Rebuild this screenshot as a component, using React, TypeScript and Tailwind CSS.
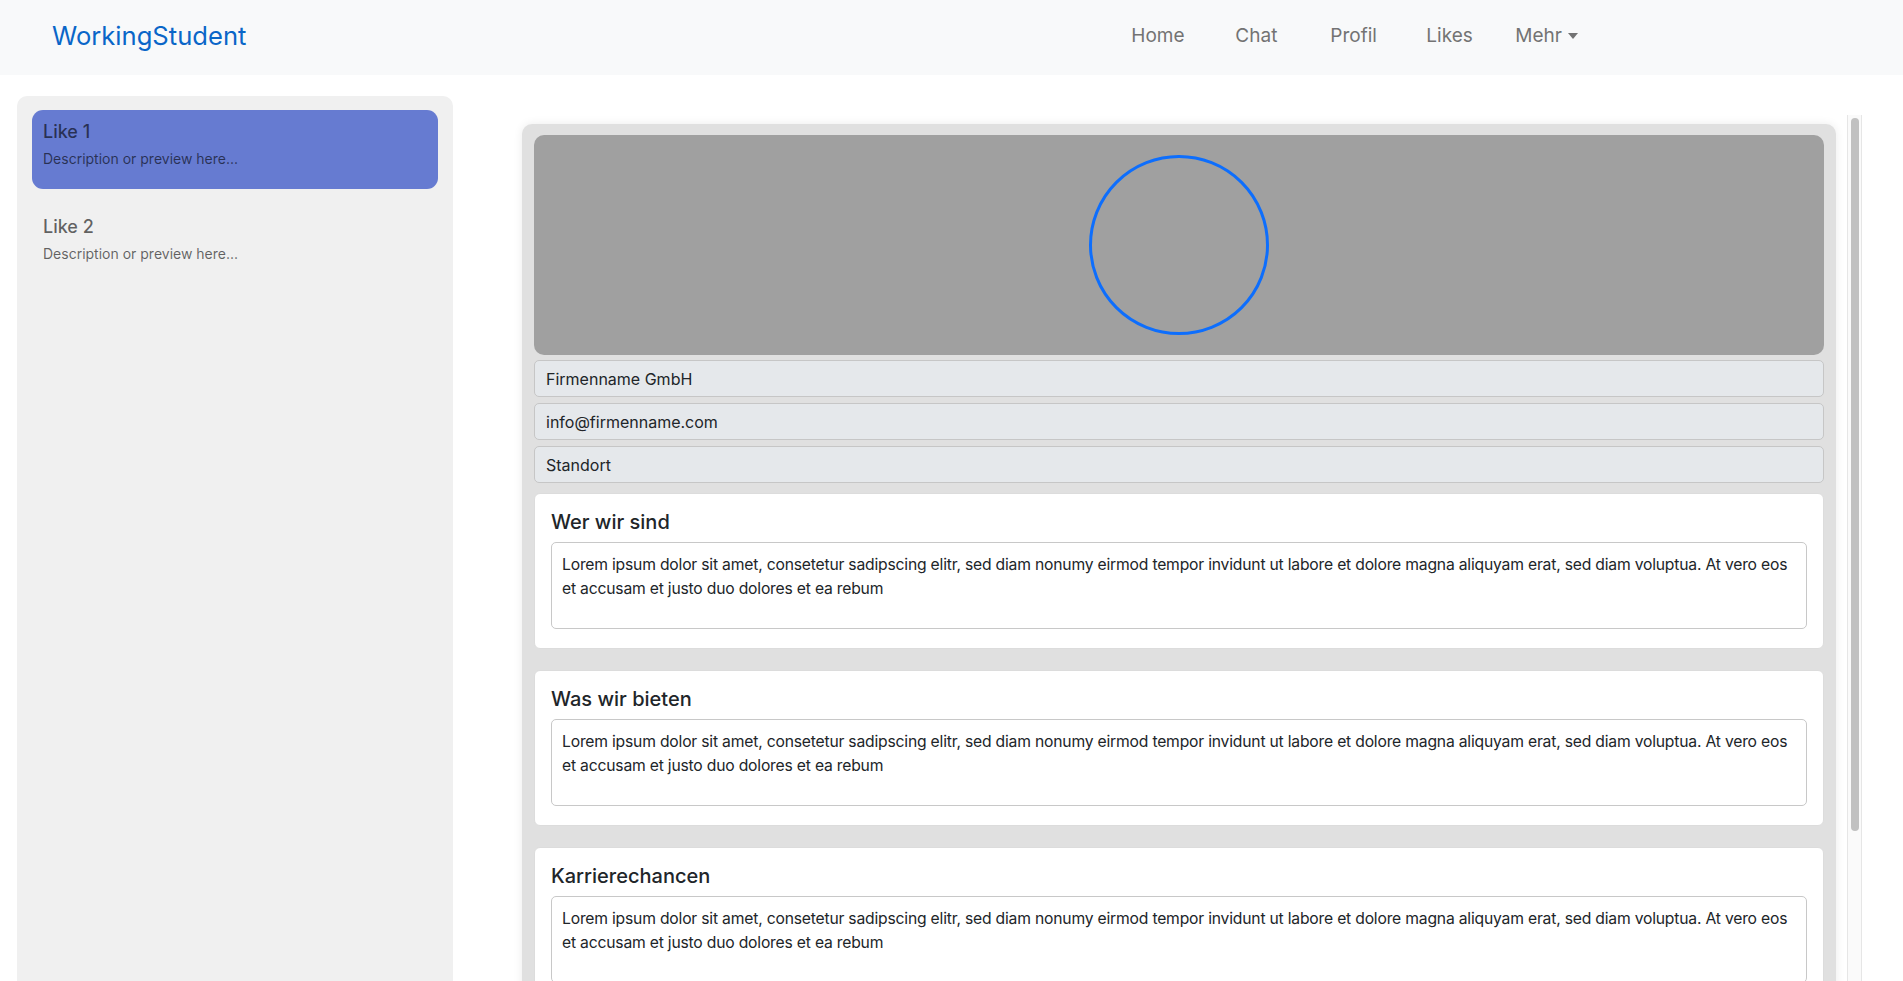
import React from 'react';

// Sidebar entries
interface Like {
  id: number;
  title: string;
  preview: string;
}

const likes: Like[] = [
  { id: 1, title: 'Like 1', preview: 'Description or preview here...' },
  { id: 2, title: 'Like 2', preview: 'Description or preview here...' },
];

const lorem =
  'Lorem ipsum dolor sit amet, consetetur sadipscing elitr, sed diam nonumy eirmod tempor invidunt ut labore et dolore magna aliquyam erat, sed diam voluptua. At vero eos et accusam et justo duo dolores et ea rebum';

const sections = ['Wer wir sind', 'Was wir bieten', 'Karrierechancen'];

const navItems = [
  { label: 'Home', width: 'w-[104px]' },
  { label: 'Chat', width: 'w-[95px]' },
  { label: 'Profil', width: 'w-[96px]' },
  { label: 'Likes', width: 'w-[89px]' },
];

function Navbar() {
  return (
    <nav className="flex h-[75px] items-center bg-[#f8f9fa] pb-[3px] pl-[52px]">
      <a href="#" className="text-[25.6px] leading-8 text-[#0a66c8]">
        WorkingStudent
      </a>
      <ul className="ml-auto mr-[325px] flex items-center">
        {navItems.map((item) => (
          <li key={item.label} className={item.width}>
            <a href="#" className="text-[19px] leading-7 text-[#737373]">
              {item.label}
            </a>
          </li>
        ))}
        <li>
          <a href="#" className="flex items-center gap-[6px] text-[19px] leading-7 text-[#737373]">
            Mehr
            <span className="mb-[1px] h-0 w-0 border-x-[5px] border-t-[6px] border-x-transparent border-t-[#737373]"></span>
          </a>
        </li>
      </ul>
    </nav>
  );
}

function LikesSidebar() {
  return (
    <aside className="ml-[17px] mt-[21px] h-[950px] w-[436px] shrink-0 rounded-[10px] bg-[#f0f0f0] px-[15px] pt-[14px]">
      <div className="flex flex-col gap-4">
        {likes.map((like, i) => (
          <div
            key={like.id}
            className={`rounded-[11px] px-[11px] pb-[20px] pt-[10px] text-black/60 ${
              i === 0 ? 'bg-[#667bd1]' : ''
            }`}
          >
            <h3 className="text-lg font-medium leading-6">{like.title}</h3>
            <p className="mt-[5px] text-sm leading-5">{like.preview}</p>
          </div>
        ))}
      </div>
    </aside>
  );
}

function ReadonlyField({ value }: { value: string }) {
  return (
    <div className="flex h-[37px] items-center rounded-[5px] border border-[#c6c6c6] bg-[#e5e8eb] px-[11px] text-base text-[#212529]">
      {value}
    </div>
  );
}

function SectionCard({ title }: { title: string }) {
  return (
    <div className="rounded-[6px] border border-[#dcdcdc] bg-white px-4 pb-[19px] pt-4">
      <h5 className="mb-2 text-xl font-medium leading-6 text-[#212529]">{title}</h5>
      <textarea
        readOnly
        value={lorem}
        className="block h-[87px] w-full resize-none rounded-[5px] border border-[#c8c8c8] bg-white p-[10px] text-[15.7px] leading-6 tracking-[-0.2px] text-[#212529] outline-none"
      />
    </div>
  );
}

function CompanyProfile() {
  return (
    <div className="ml-[46px] mr-[11px] rounded-[10px] bg-[#e0e0e0] px-3 pb-3 pt-[11px] shadow-[0_0_10px_rgba(0,0,0,0.08)]">
      <div className="flex h-[220px] items-center justify-center rounded-[10px] bg-[#a0a0a0]">
        <div className="h-[180px] w-[180px] rounded-full border-[3px] border-[#0d6efd]"></div>
      </div>
      <div className="mt-[5px] flex flex-col gap-[6px]">
        <ReadonlyField value="Firmenname GmbH" />
        <ReadonlyField value="info@firmenname.com" />
        <ReadonlyField value="Standort" />
      </div>
      <div className="mt-[10px] flex flex-col gap-[21px]">
        {sections.map((s) => (
          <SectionCard key={s} title={s} />
        ))}
      </div>
    </div>
  );
}

export default function App() {
  return (
    <div className="h-screen overflow-hidden bg-white font-['Inter',sans-serif]">
      <Navbar />
      <div className="flex">
        <LikesSidebar />
        <div className="ml-[23px] mt-[40px] flex h-[calc(100vh-115px)] w-[1386px]">
          <div className="flex-1 overflow-hidden pt-[9px]">
            <CompanyProfile />
          </div>
          {/* scrollbar of the profile pane */}
          <div className="w-[15px] shrink-0 border-x border-[#e6e6e6] bg-[#fafafa] pl-[3px] pr-[2px] pt-[3px]">
            <div className="h-[713px] rounded-full bg-[#c1c1c1]"></div>
          </div>
        </div>
      </div>
    </div>
  );
}
